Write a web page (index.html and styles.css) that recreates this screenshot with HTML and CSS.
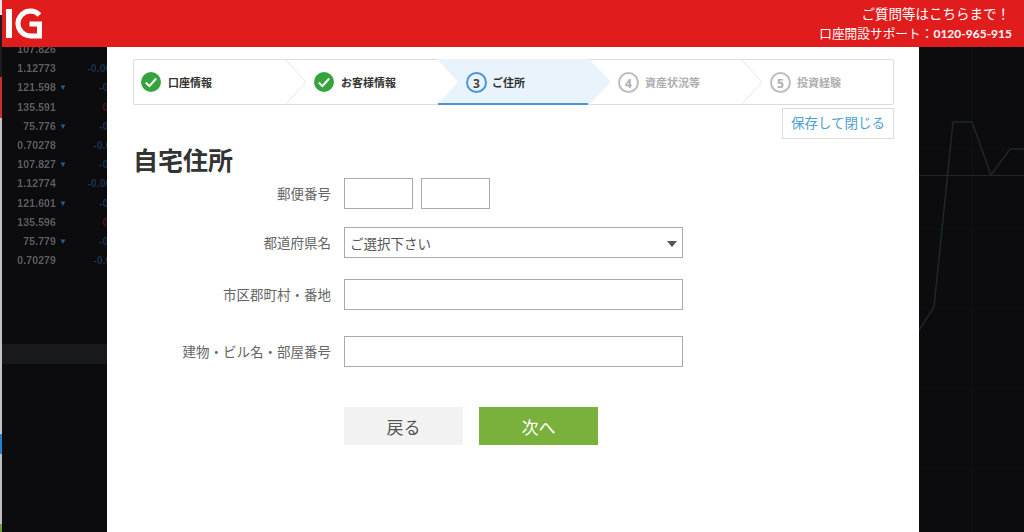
FILE: index.html
```html
<!DOCTYPE html>
<html lang="ja">
<head>
<meta charset="utf-8">
<title>自宅住所</title>
<link rel="stylesheet" href="styles.css">
</head>
<body>
<div class="page">
  <div class="edge">
    <i class="seg seg-white"></i><i class="seg seg-dark"></i><i class="seg seg-red"></i>
    <i class="seg seg-light"></i><i class="seg seg-blue"></i><i class="seg seg-light2"></i><i class="seg seg-green"></i>
  </div>
  <div class="app">
    <header class="topbar">
      <svg class="logo" viewBox="0 0 38 32" width="38" height="32" role="img" aria-label="IG">
        <rect x="0" y="1" width="6" height="29" fill="#fff"/>
        <path d="M33.500 7A13 13 0 0 0 24.500 3 12.500 12.500 0 0 0 12 15.500 12.500 12.500 0 0 0 24.500 28H33.500V16H23.500" fill="none" stroke="#fff" stroke-width="5"/>
      </svg>
      <div class="contact">
        <p class="contact-lead">ご質問等はこちらまで！</p>
        <p>口座開設サポート：<b>0120-965-915</b></p>
      </div>
    </header>
    <main class="workspace">
      <aside class="market">
        <div class="band"></div>
        <ul class="quotes">
          <li><span class="price">107.826</span><span class="dir"></span><span class="delta"></span></li>
          <li><span class="price">1.12773</span><span class="dir"></span><span class="delta">-0.0012</span></li>
          <li><span class="price">121.598</span><span class="dir">▼</span><span class="delta">-0.10</span></li>
          <li><span class="price">135.591</span><span class="dir"></span><span class="delta up">0.10</span></li>
          <li><span class="price">75.776</span><span class="dir">▼</span><span class="delta">-0.10</span></li>
          <li><span class="price">0.70278</span><span class="dir"></span><span class="delta">-0.001</span></li>
          <li><span class="price">107.827</span><span class="dir">▼</span><span class="delta">-0.10</span></li>
          <li><span class="price">1.12774</span><span class="dir"></span><span class="delta">-0.0012</span></li>
          <li><span class="price">121.601</span><span class="dir">▼</span><span class="delta">-0.10</span></li>
          <li><span class="price">135.596</span><span class="dir"></span><span class="delta up">0.10</span></li>
          <li><span class="price">75.779</span><span class="dir">▼</span><span class="delta">-0.10</span></li>
          <li><span class="price">0.70279</span><span class="dir"></span><span class="delta">-0.001</span></li>
        </ul>
      </aside>

      <section class="modal">
        <ol class="steps">
          <li class="step step-first">
            <svg class="badge" viewBox="0 0 20 20" width="20" height="20"><circle cx="10" cy="10" r="10" fill="#36a33e"/><path d="M4.800 10.500l3.600 3.600 6.800-7.600" fill="none" stroke="#fff" stroke-width="2"/></svg>
            <span>口座情報</span>
            <svg class="sep" viewBox="0 0 22 46" width="22" height="46"><path d="M0 0l21 23L0 46" fill="none" stroke="#e6e6e6"/></svg>
          </li>
          <li class="step">
            <svg class="badge" viewBox="0 0 20 20" width="20" height="20"><circle cx="10" cy="10" r="10" fill="#36a33e"/><path d="M4.800 10.500l3.600 3.600 6.800-7.600" fill="none" stroke="#fff" stroke-width="2"/></svg>
            <span>お客様情報</span>
          </li>
          <li class="step step-active">
            <svg class="tab" viewBox="0 0 174 46" width="174" height="46"><path d="M0 0H152L174 23 152 46H0L21 23Z" fill="#e8f3fb"/></svg>
            <span class="num">3</span>
            <span>ご住所</span>
          </li>
          <li class="step step-todo">
            <span class="num">4</span>
            <span>資産状況等</span>
            <svg class="sep" viewBox="0 0 22 46" width="22" height="46"><path d="M0 0l21 23L0 46" fill="none" stroke="#e6e6e6"/></svg>
          </li>
          <li class="step step-todo">
            <span class="num">5</span>
            <span>投資経験</span>
          </li>
        </ol>

        <div class="save-row"><button class="save" type="button">保存して閉じる</button></div>

        <h1 class="title">自宅住所</h1>

        <form class="form">
          <div class="row row-zip">
            <label class="label">郵便番号</label>
            <div class="zip">
              <input class="field field-zip" type="text" aria-label="郵便番号前半">
              <input class="field field-zip" type="text" aria-label="郵便番号後半">
            </div>
          </div>
          <div class="row row-pref">
            <label class="label">都道府県名</label>
            <div class="select-wrap">
              <select class="field select"><option>ご選択下さい</option></select>
            </div>
          </div>
          <div class="row row-city">
            <label class="label">市区郡町村・番地</label>
            <input class="field" type="text">
          </div>
          <div class="row row-bldg">
            <label class="label">建物・ビル名・部屋番号</label>
            <input class="field" type="text">
          </div>
          <div class="actions">
            <button class="btn btn-back" type="button">戻る</button>
            <button class="btn btn-next" type="button">次へ</button>
          </div>
        </form>
      </section>

      <aside class="chart">
        <svg viewBox="0 0 105 485" width="105" height="485">
          <path d="M53.500 0V485M0 102.500H105M0 182.500H105M0 262.500H105M0 342.500H105M0 422.500H105" stroke="#0f1012" fill="none"/>
          <path d="M0 128.500H105" stroke="#232528" fill="none"/>
          <path d="M0 283L15 260 34 75H53L72 128 91 102H105" stroke="#1e2631" stroke-width="1.500" fill="none"/>
        </svg>
      </aside>
    </main>
  </div>
</div>
</body>
</html>
```

FILE: styles.css
```css
* { box-sizing: border-box; }
html, body { margin: 0; height: 100%; }
body {
  font-family: "Noto Sans CJK JP", "Noto Sans", sans-serif;
  background: #0c0c0e;
  overflow: hidden;
}
.page { display: flex; width: 1024px; height: 532px; }

/* sliver of the page behind the app */
.edge { width: 2px; flex: none; display: flex; flex-direction: column; }
.seg { display: block; }
.seg-white { height: 15px; background: #e8e8e8; }
.seg-dark { height: 62px; background: #1c1c1e; }
.seg-red { height: 41px; background: #c9302c; }
.seg-light { height: 316px; background: #c4c4c4; }
.seg-blue { height: 20px; background: #2c7fc4; }
.seg-light2 { height: 70px; background: #bdbdbd; }
.seg-green { height: 8px; background: #6f9d3c; }

.app { flex: 1; min-width: 0; display: flex; flex-direction: column; }

.topbar {
  height: 47px;
  flex: none;
  background: #e01c1c;
  color: #fff;
  display: flex;
  align-items: flex-start;
  justify-content: space-between;
  padding: 8px 12px 0 4px;
}
.logo { display: block; }
.contact {
  text-align: right;
  font-size: 12.700px;
  line-height: 19px;
  font-family: "Lato", "Noto Sans CJK JP", sans-serif;
  margin-top: -3px;
}
.contact p { margin: 0; }
.contact-lead { font-size: 13.500px; padding-right: 2px; }
.contact b { font-weight: 700; font-size: 12px; }

.workspace { flex: 1; min-height: 0; display: flex; }

/* blurred market list */
.market {
  width: 105px;
  flex: none;
  position: relative;
  overflow: hidden;
  background: #0c0c0e;
}
.band { position: absolute; left: 0; right: 0; top: 297px; height: 20px; background: #18191b; }
.quotes {
  list-style: none;
  margin: -7px 0 0;
  padding: 0;
  width: 125px;
  filter: blur(0.7px);
  font: bold 10.500px/19.200px "Liberation Sans", sans-serif;
  color: #5e5e5e;
}
.quotes li { display: flex; height: 19.200px; }
.price { width: 54px; text-align: right; letter-spacing: 0.1px; }
.dir { width: 11px; flex: none; text-align: right; font-size: 8px; color: #2a5a8e; }
.delta { flex: 1; text-align: right; color: #1a3350; padding-right: 4px; }
.delta.up { color: #501717; }

/* modal */
.modal {
  width: 812px;
  flex: none;
  background: #fff;
  padding: 12px 25px 0 26px;
  color: #333;
}

.steps {
  list-style: none;
  margin: 0;
  padding: 0;
  height: 46px;
  display: flex;
  border: 1px solid #dcdcdc;
  border-radius: 2px;
}
.step {
  position: relative;
  width: 152px;
  height: 44px;
  flex: none;
  display: flex;
  align-items: center;
  gap: 7px;
  padding-left: 29px;
  font-size: 11px;
  font-weight: 700;
  color: #333;
}
.step-first { width: 151px; padding-left: 7px; }
.step-todo { color: #aeaeae; }
.badge { flex: none; position: relative; }
.sep { position: absolute; top: -1px; right: -22px; z-index: 1; }
.step-active { z-index: 2; }
.step-active::after {
  content: "";
  position: absolute;
  left: 1px;
  right: 1px;
  bottom: -1px;
  height: 2px;
  background: #4c95d6;
}
.tab { position: absolute; left: 0; top: -1px; }
.step-active > span { position: relative; }
.num {
  flex: none;
  width: 21px;
  height: 21px;
  margin-right: -1px;
  border-radius: 50%;
  border: 2px solid #4c95d6;
  color: #444;
  font: 700 12px/18px "Noto Sans", sans-serif;
  text-align: center;
  padding-top: 1px;
}
.step-active .num { margin-right: -2px; }
.step-todo .num { border-color: #bdbdbd; color: #aeaeae; }

.save-row { display: flex; justify-content: flex-end; margin-top: 3px; }
.save {
  width: 112px;
  height: 31px;
  padding: 0 0 1px;
  background: #fff;
  border: 1px solid #dcdcdc;
  color: #4a9fd5;
  font: 13.500px/1 "Noto Sans CJK JP", sans-serif;
}

.title {
  margin: 4px 0 2px;
  font-size: 25px;
  line-height: 33px;
  font-weight: 700;
  color: #333;
}

.form { display: flex; flex-direction: column; }
.row { display: flex; align-items: center; gap: 13px; }
.row-pref { margin-top: 18px; }
.row-city { margin-top: 21px; }
.row-bldg { margin-top: 26px; }
.label {
  width: 198px;
  flex: none;
  text-align: right;
  font-size: 13.500px;
  line-height: 20px;
  margin-top: -2px;
  color: #666;
  white-space: nowrap;
}
.field {
  display: block;
  width: 339px;
  height: 31px;
  border: 1px solid #aaa;
  border-radius: 0;
  background: #fff;
  padding: 0 5px;
  margin: 0;
  font: 13.500px "Noto Sans CJK JP", sans-serif;
  color: #555;
}
.zip { display: flex; gap: 8px; }
.field-zip { width: 69px; }
.select-wrap { position: relative; }
.select { appearance: none; -webkit-appearance: none; outline: none; }
.select-wrap::after {
  content: "";
  position: absolute;
  right: 6px;
  top: 14px;
  border-style: solid;
  border-width: 6px 5.500px 0;
  border-color: #555 transparent transparent;
}

.actions { display: flex; gap: 16px; margin: 40px 0 0 211px; }
.btn {
  width: 119px;
  height: 38px;
  border: 0;
  padding: 0;
  font: 17px/1 "Noto Sans CJK JP", sans-serif;
}
.btn-back { background: #f2f2f2; color: #555; }
.btn-next { background: #7ab13c; color: #fff; }

/* dim chart */
.chart { flex: 1; min-width: 0; overflow: hidden; background: #0c0c0e; }
.chart svg { display: block; }
```
